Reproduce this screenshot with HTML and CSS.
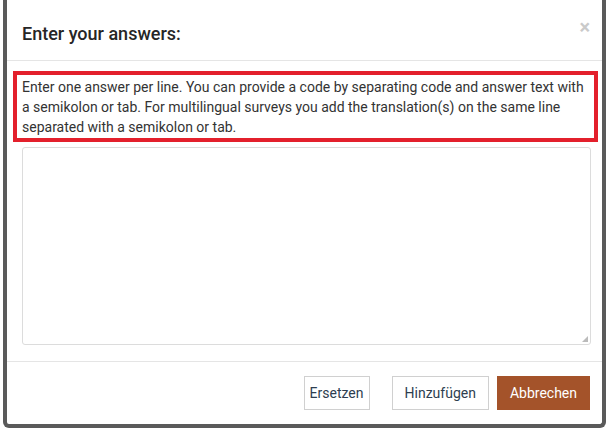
FILE: index.html
```html
<!DOCTYPE html>
<html>
<head>
<meta charset="utf-8">
<link rel="stylesheet" href="styles.css">
</head>
<body>
<div class="frame">
  <div class="modal">
    <div class="modal-header">
      <h4 class="modal-title">Enter your answers:</h4>
      <span class="close">&times;</span>
    </div>
    <div class="modal-body">
      <p class="help">Enter one answer per line. You can provide a code by separating code and answer text with a semikolon or tab. For multilingual surveys you add the translation(s) on the same line separated with a semikolon or tab.</p>
      <div class="answers">
        <textarea class="answers-input"></textarea>
      </div>
    </div>
    <div class="modal-footer">
      <button class="btn btn-default btn-replace">Ersetzen</button>
      <button class="btn btn-default btn-add">Hinzufügen</button>
      <button class="btn btn-cancel">Abbrechen</button>
    </div>
  </div>
</div>
</body>
</html>
```

FILE: styles.css
```css
html, body {
  margin: 0;
  padding: 0;
  background: #fff;
}
body {
  font-family: Roboto, "Liberation Sans", sans-serif;
  color: #333;
  width: 609px;
  height: 430px;
  overflow: hidden;
}
.frame {
  padding: 4px 3px 0 3px;
}
.modal {
  width: 595px;
  height: 424px;
  border: 4px solid #5a5a5a;
  border-top: 0;
  border-radius: 0 0 6px 6px;
  background: #fff;
  display: flex;
  flex-direction: column;
  box-sizing: content-box;
  margin-top: -4px;
}
.modal-header {
  display: flex;
  align-items: center;
  justify-content: space-between;
  height: 61px;
  padding: 0 12px 0 15px;
  border-bottom: 1px solid #e5e5e5;
  box-sizing: border-box;
  flex: none;
}
.modal-title {
  margin: 0;
  font-size: 18px;
  font-weight: 500;
  color: #262626;
  padding-top: 6px;
}
.close {
  font-size: 20px;
  color: #cacaca;
  font-weight: 700;
  line-height: 1;
  margin-top: -6px;
}
.modal-body {
  padding: 10px 4px 0 6px;
  flex: 1;
  display: flex;
  flex-direction: column;
}
.help {
  margin: 0;
  border: 4px solid #e3202c;
  padding: 2px 5px 1px 5px;
  font-size: 14px;
  line-height: 20px;
  color: #333;
}
.answers {
  padding: 5px 7px 0 9px;
  position: relative;
}
.answers-input {
  display: block;
  width: 100%;
  height: 198px;
  box-sizing: border-box;
  border: 1px solid #dcdcdc;
  border-radius: 3px;
  resize: none;
  margin: 0;
  font: inherit;
}
.answers::after {
  content: "";
  position: absolute;
  right: 10px;
  bottom: 3px;
  width: 6px;
  height: 6px;
  background-image: radial-gradient(circle, #bbb 0.8px, transparent 1px);
  background-size: 2px 2px;
  clip-path: polygon(100% 0, 100% 100%, 0 100%);
}
.modal-footer {
  height: 63px;
  border-top: 1px solid #e5e5e5;
  display: flex;
  align-items: center;
  justify-content: flex-end;
  padding: 0 12px 0 15px;
  flex: none;
  box-sizing: border-box;
  margin-top: auto;
}
.btn {
  font-family: Roboto, "Liberation Sans", sans-serif;
  font-size: 14px;
  height: 34px;
  padding: 0 12px;
  border-radius: 0;
  cursor: pointer;
}
.btn-default {
  background: #fff;
  color: #2d3e50;
  border: 1px solid #d0d0d0;
}
.btn-replace {
  padding: 0 5px;
  margin-right: 22px;
}
.btn-add {
  margin-right: 8px;
}
.btn-cancel {
  background: #a4532a;
  color: #fff;
  border: 1px solid #a4532a;
}
```
